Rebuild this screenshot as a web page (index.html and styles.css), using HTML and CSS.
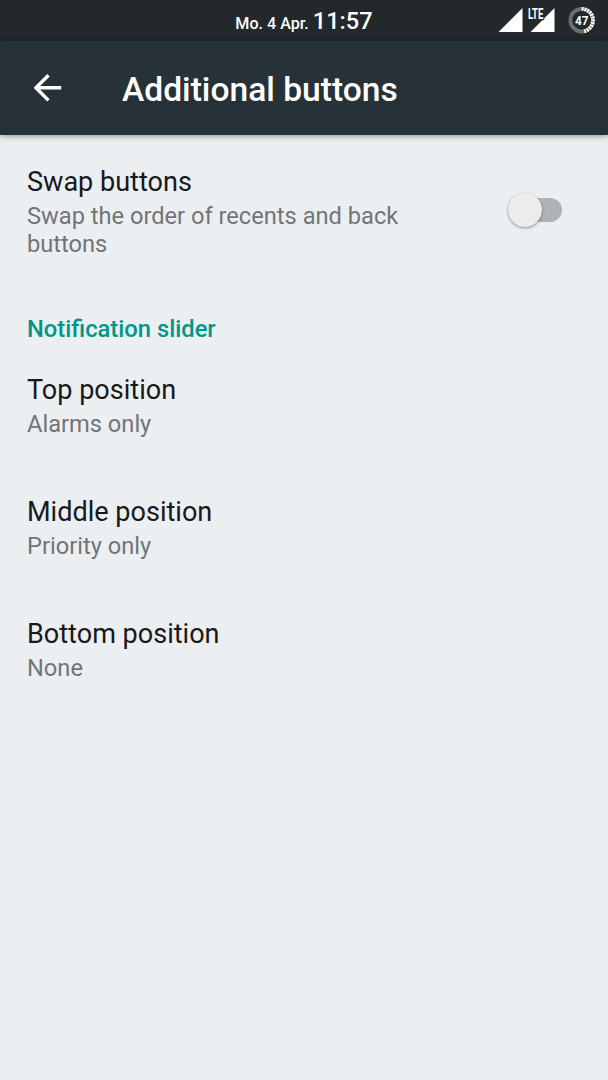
FILE: index.html
```html
<!DOCTYPE html>
<html lang="en">
<head>
  <meta charset="utf-8">
  <title>Additional buttons</title>
  <link rel="stylesheet" href="styles.css">
</head>
<body>
  <div class="statusbar">
    <div class="clock"><span class="date">Mo. 4 Apr.</span> <span class="time">11:57</span></div>
    <svg class="status-icons" width="110" height="40" viewBox="498 0 110 40">
      <path class="signal" d="M498.5 32 522.5 8V32Z"/>
      <path class="signal" d="M530.5 32 554.5 8V32Z"/>
      <text class="lte" x="528" y="18.8" textLength="15.4" lengthAdjust="spacingAndGlyphs">LTE</text>
      <circle class="battery-ring" cx="581.7" cy="20.2" r="11.3"/>
      <path class="battery-level" d="M581.7 8.9A11.3 11.3 0 0 1 583.8 31.3"/>
      <text class="battery-text" x="581.7" y="24.8" textLength="13.4" lengthAdjust="spacingAndGlyphs">47</text>
    </svg>
  </div>

  <header class="appbar">
    <svg class="back" width="28" height="28" viewBox="0 0 28 28">
      <path d="M14.5 1.2 1.9 13.8 14.5 26.4M2.4 13.8H27.2"/>
    </svg>
    <h1>Additional buttons</h1>
  </header>

  <main>
    <div class="item swap">
      <div class="text">
        <h2>Swap buttons</h2>
        <p>Swap the order of recents and back buttons</p>
      </div>
      <div class="switch"><div class="thumb"></div></div>
    </div>

    <h3>Notification slider</h3>

    <div class="item">
      <div class="text">
        <h2>Top position</h2>
        <p>Alarms only</p>
      </div>
    </div>
    <div class="item">
      <div class="text">
        <h2>Middle position</h2>
        <p>Priority only</p>
      </div>
    </div>
    <div class="item">
      <div class="text">
        <h2>Bottom position</h2>
        <p>None</p>
      </div>
    </div>
  </main>
</body>
</html>
```

FILE: styles.css
```css
body {
  margin: 0;
  min-height: 1080px;
  background-color: #ebeff2;
  color: #17191a;
  font-family: Roboto, sans-serif;
}
h1, h2, h3, p {
  margin: 0;
}

.statusbar {
  display: grid;
  grid-template-columns: 110px 1fr 110px;
  height: 41px;
  background-color: #22282b;
  color: #fff;
}
.clock {
  grid-column: 2;
  text-align: center;
  line-height: 43px;
  font-weight: 500;
  white-space: nowrap;
}
.date {
  font-size: 16.1px;
}
.time {
  font-size: 23.6px;
}
.signal {
  fill: #fff;
}
.lte {
  fill: #fff;
  stroke: #22282b;
  stroke-width: 2.5px;
  paint-order: stroke;
  font-size: 14.5px;
  font-weight: 700;
}
.battery-ring {
  fill: none;
  stroke: #6b6f71;
  stroke-width: 3.8px;
}
.battery-level {
  fill: none;
  stroke: #fff;
  stroke-width: 3.8px;
  stroke-dasharray: 1.9 .9;
}
.battery-text {
  fill: #fff;
  font-size: 13.5px;
  font-weight: 700;
  text-anchor: middle;
}

.appbar {
  display: flex;
  align-items: center;
  height: 94px;
  background-color: #273238;
  color: #fff;
  box-shadow: 0 1px 6px rgba(0, 0, 0, .4);
}
.back {
  margin-left: 34px;
  fill: none;
  stroke: #fff;
  stroke-width: 3.4px;
}
.appbar h1 {
  margin-left: 60px;
  padding-top: 2px;
  font-size: 33.6px;
  font-weight: 500;
}

main {
  padding-top: 27px;
}
.item {
  display: flex;
  align-items: center;
  box-sizing: border-box;
  height: 122px;
  padding: 0 46px 0 27px;
}
.swap {
  height: 95px;
}
.swap .text {
  padding-top: 4px;
}
.text {
  width: 400px;
}
.item h2 {
  font-size: 27.05px;
  font-weight: 400;
  line-height: 32px;
}
.item p {
  margin-top: 4px;
  color: #727577;
  font-size: 23.65px;
  line-height: 28px;
}
.switch {
  display: flex;
  align-items: center;
  width: 54px;
  height: 24px;
  margin-left: auto;
  border-radius: 12px;
  background-color: #afb3b5;
}
.thumb {
  width: 34px;
  height: 34px;
  border-radius: 50%;
  background-color: #ececec;
  box-shadow: 0 1px 3px rgba(0, 0, 0, .4);
}
h3 {
  margin-top: 56px;
  padding-left: 27px;
  color: #009688;
  font-size: 23.75px;
  font-weight: 500;
  line-height: 32px;
}
```
